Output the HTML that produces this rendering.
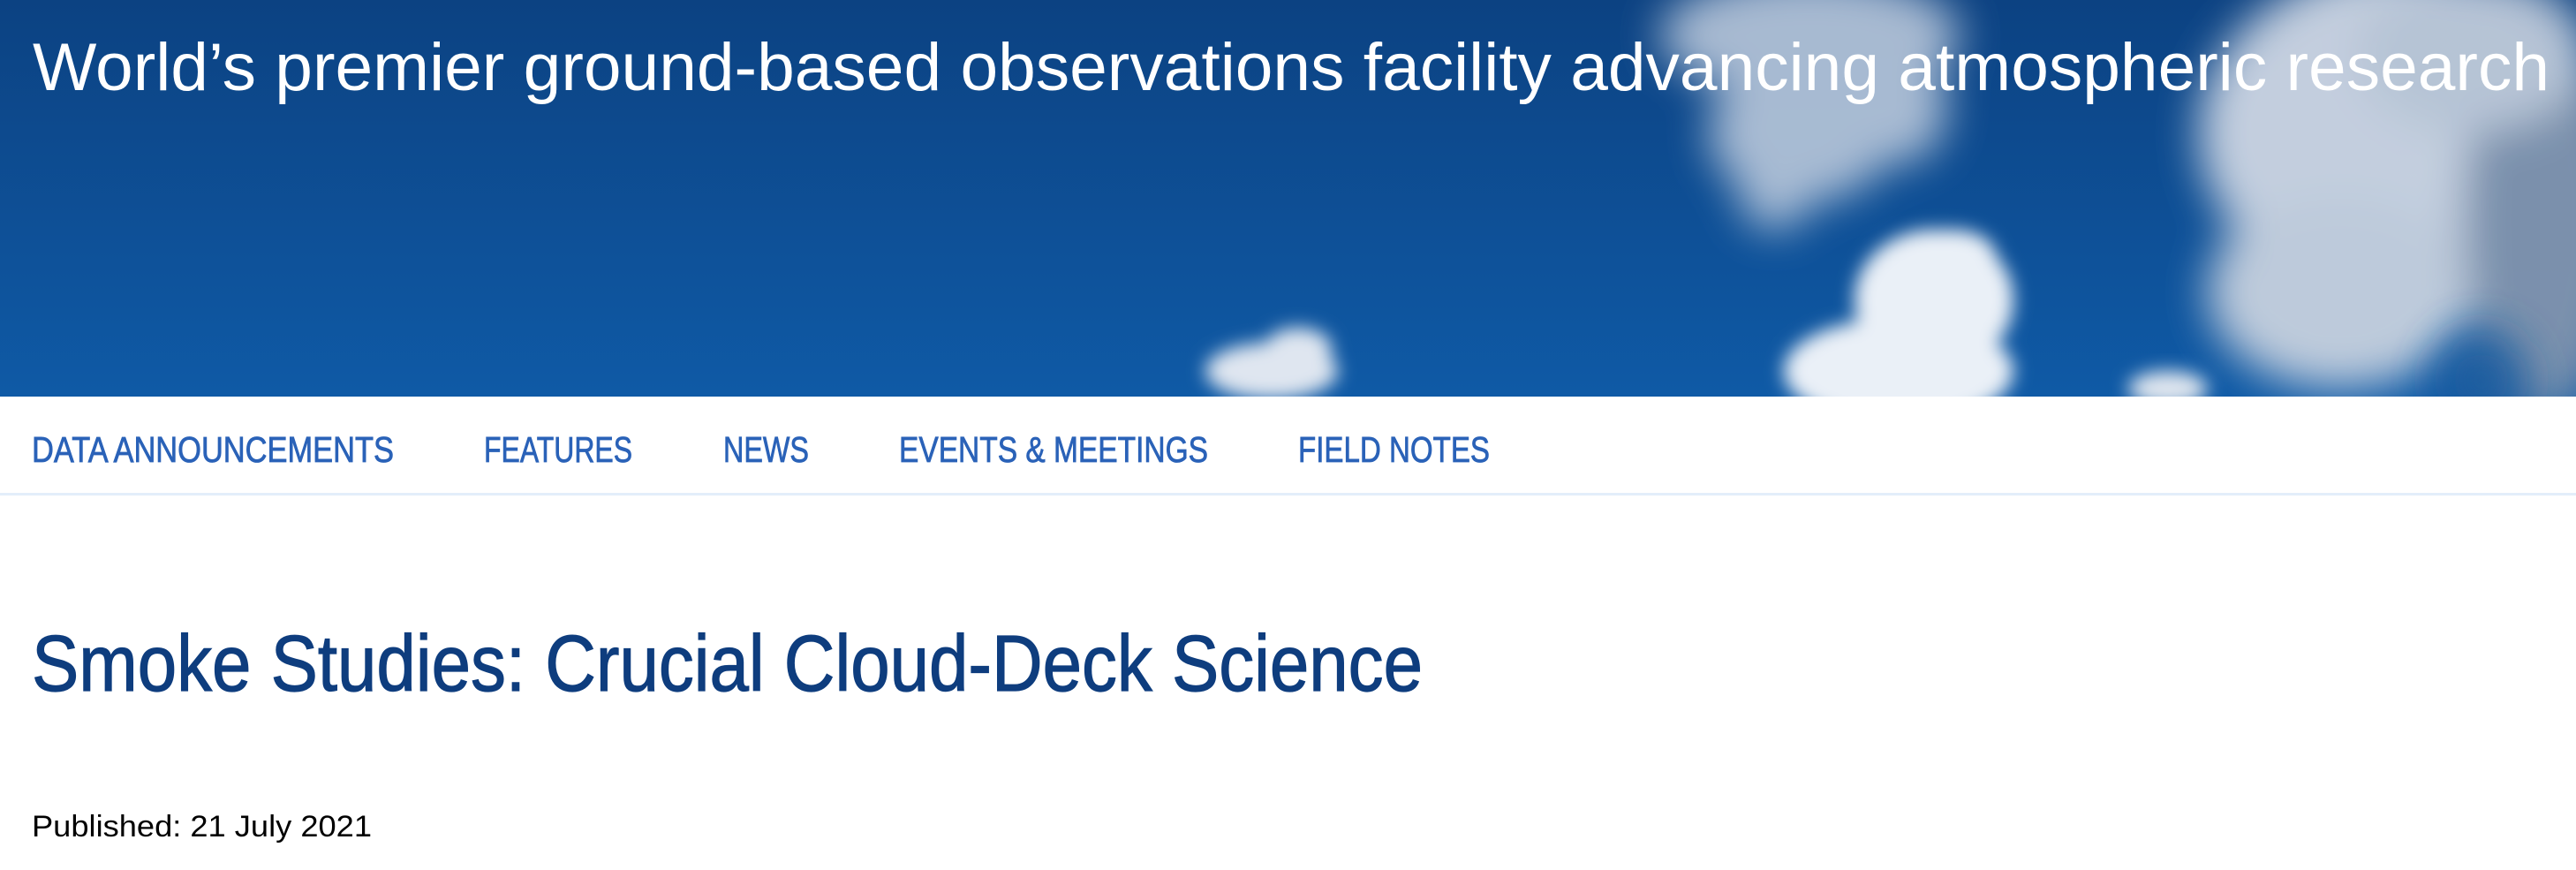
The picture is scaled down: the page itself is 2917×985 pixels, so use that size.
<!DOCTYPE html>
<html><head><meta charset="utf-8"><style>
html,body{margin:0;padding:0;background:#fff;width:2917px;height:985px;overflow:hidden}
svg{display:block}
</style></head><body>
<svg width="2917" height="985" viewBox="0 0 2917 985" xmlns="http://www.w3.org/2000/svg">
<defs>
<linearGradient id="sky" x1="0" y1="0" x2="0" y2="1">
<stop offset="0" stop-color="#0c4282"/><stop offset="1" stop-color="#0f5aa6"/>
</linearGradient>
<filter id="b1" x="-50%" y="-50%" width="200%" height="200%"><feGaussianBlur stdDeviation="24"/></filter>
<filter id="b2" x="-50%" y="-50%" width="200%" height="200%"><feGaussianBlur stdDeviation="10"/></filter>
<clipPath id="hc"><rect x="0" y="0" width="2917" height="449"/></clipPath>
</defs>
<rect x="0" y="0" width="2917" height="449" fill="url(#sky)"/>
<g clip-path="url(#hc)">
<g filter="url(#b1)" fill="#c3cfdf" opacity="0.85">
<ellipse cx="2050" cy="40" rx="170" ry="70"/>
<ellipse cx="2040" cy="150" rx="105" ry="80"/>
<ellipse cx="2010" cy="220" rx="40" ry="40"/>
<ellipse cx="2150" cy="120" rx="55" ry="65"/>
</g>
<g filter="url(#b1)" opacity="0.95">
<ellipse cx="2720" cy="150" rx="230" ry="190" fill="#cdd6e3"/>
<ellipse cx="2650" cy="330" rx="150" ry="110" fill="#c7d1df"/>
<ellipse cx="2880" cy="250" rx="90" ry="220" fill="#8194ae"/>
<ellipse cx="2800" cy="60" rx="130" ry="90" fill="#c0cbda"/>
</g>
<ellipse cx="2810" cy="430" rx="55" ry="55" fill="#1a5d9f" opacity="0.8" filter="url(#b1)"/>
<g filter="url(#b2)" fill="#eaf0f7">
<ellipse cx="2190" cy="340" rx="90" ry="80"/>
<ellipse cx="2150" cy="420" rx="130" ry="60"/>
<ellipse cx="2210" cy="290" rx="50" ry="30"/>
</g>
<g filter="url(#b2)" fill="#dfe6f0">
<ellipse cx="1440" cy="420" rx="75" ry="32"/>
<ellipse cx="1470" cy="395" rx="38" ry="24"/>
</g>
<ellipse cx="2455" cy="440" rx="45" ry="20" fill="#dfe6ef" filter="url(#b2)"/>
</g>
<text x="37" y="102" font-family="Liberation Sans, sans-serif" font-size="76" fill="#fff" textLength="2850" lengthAdjust="spacingAndGlyphs">World’s premier ground-based observations facility advancing atmospheric research</text>
<g font-family="Liberation Sans, sans-serif" font-size="41" fill="#2a62b8" stroke="#2a62b8" stroke-width="0.8">
<text x="36" y="523" textLength="410" lengthAdjust="spacingAndGlyphs">DATA ANNOUNCEMENTS</text>
<text x="548" y="523" textLength="168" lengthAdjust="spacingAndGlyphs">FEATURES</text>
<text x="819" y="523" textLength="97" lengthAdjust="spacingAndGlyphs">NEWS</text>
<text x="1018" y="523" textLength="350" lengthAdjust="spacingAndGlyphs">EVENTS &amp; MEETINGS</text>
<text x="1470" y="523" textLength="217" lengthAdjust="spacingAndGlyphs">FIELD NOTES</text>
</g>
<rect x="0" y="558" width="2917" height="3" fill="#e3eefa"/>
<text x="36" y="782" font-family="Liberation Sans, sans-serif" font-size="90" fill="#0e3d7e" stroke="#0e3d7e" stroke-width="1.2" textLength="1575" lengthAdjust="spacingAndGlyphs">Smoke Studies: Crucial Cloud-Deck Science</text>
<text x="36" y="947" font-family="Liberation Sans, sans-serif" font-size="34" fill="#000" textLength="385" lengthAdjust="spacingAndGlyphs">Published: 21 July 2021</text>
</svg>
</body></html>
